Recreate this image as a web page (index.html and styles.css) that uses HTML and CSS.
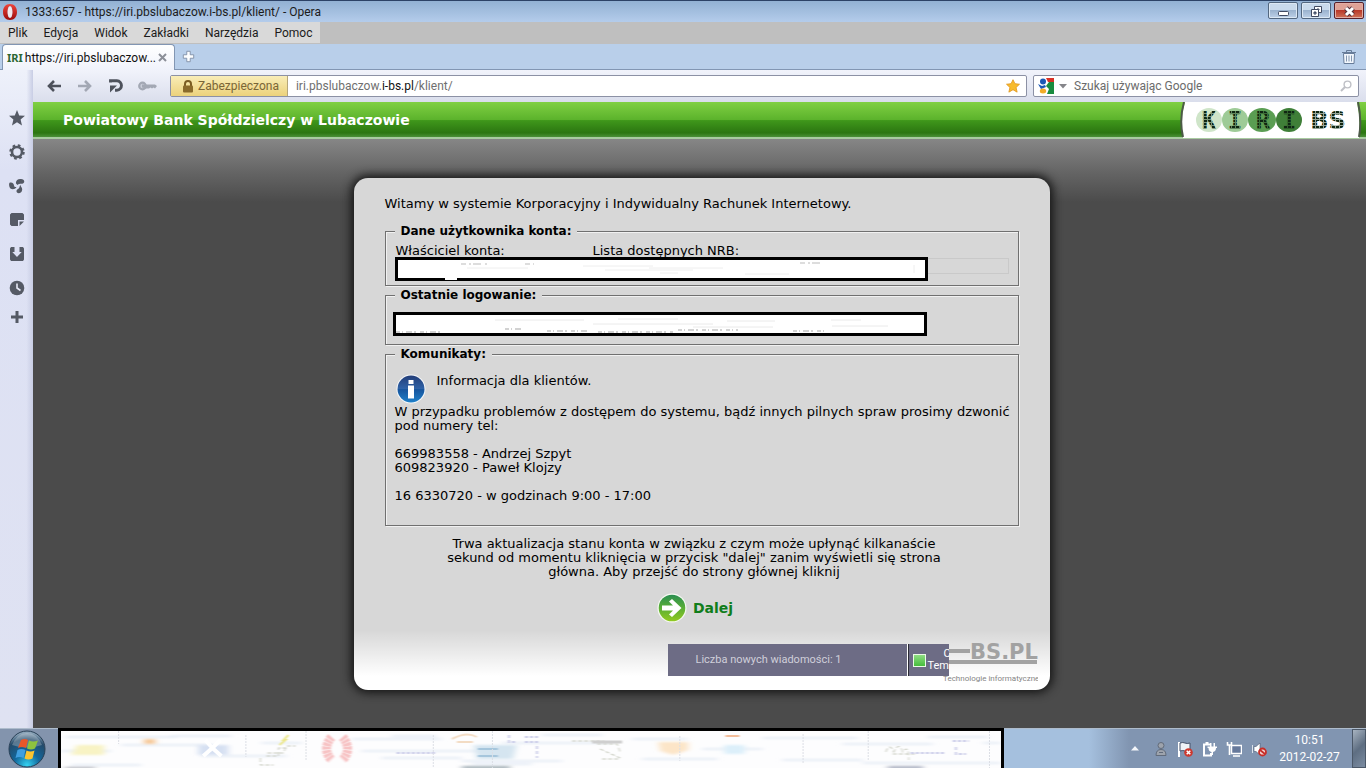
FILE: index.html
```html
<!DOCTYPE html>
<html lang="pl">
<head>
<meta charset="utf-8">
<title>1333:657 - https://iri.pbslubaczow.i-bs.pl/klient/ - Opera</title>
<link rel="stylesheet" href="styles.css">
</head>
<body>
<div class="desktop">
  <header class="titlebar">
    <svg class="opera" viewBox="0 0 16 18" width="16" height="18"><defs><linearGradient id="op" x1="0" y1="0" x2="0" y2="1"><stop offset="0" stop-color="#f0453c"/><stop offset="1" stop-color="#9c0b0b"/></linearGradient></defs><path fill="url(#op)" fill-rule="evenodd" d="M8 1C3.600 1 1 4.500 1 9s2.600 8 7 8 7-3.500 7-8-2.600-8-7-8zm0 2.200c1.700 0 2.400 2 2.400 5.800S9.700 14.800 8 14.800 5.600 12.800 5.600 9 6.300 3.200 8 3.200z"/><ellipse cx="8" cy="9" rx="2.300" ry="5.800" fill="#f3e9ee"/></svg>
    <span class="title">1333:657 - https://iri.pbslubaczow.i-bs.pl/klient/ - Opera</span>
    <div class="winbtns">
      <button aria-label="Minimalizuj"><svg width="28" height="16" viewBox="0 0 28 16"><rect x="9.500" y="8.500" width="10" height="4" rx="1" fill="#fff" stroke="#414b62"/></svg></button>
      <button aria-label="Przywróć"><svg width="28" height="16" viewBox="0 0 28 16"><g fill="#fff" stroke="#414b62"><path fill-rule="evenodd" d="M12.500 3.500h7v6h-7zM15 6v1h2V6z"/><path fill-rule="evenodd" d="M9.500 6.500h7v7h-7zM12 9v2h2V9z"/></g></svg></button>
      <button class="close" aria-label="Zamknij"><svg width="28" height="16" viewBox="0 0 28 16"><path d="M11 5l7 7m0-7l-7 7" stroke="#53303a" stroke-width="5"/><path d="M11 5l7 7m0-7l-7 7" stroke="#fff" stroke-width="3"/></svg></button>
    </div>
  </header>
  <nav class="menubar">
    <div class="menus"><button>Plik</button><button>Edycja</button><button>Widok</button><button>Zakładki</button><button>Narzędzia</button><button>Pomoc</button></div>
  </nav>
  <div class="tabbar">
    <div class="tab"><b>IRI</b><span>https://iri.pbslubaczow...</span><button aria-label="Zamknij kartę"><svg width="9" height="9" viewBox="0 0 9 9"><path d="M1 1l7 7m0-7L1 8" stroke="#8b8f98" stroke-width="2"/></svg></button></div>
    <button class="newtab" aria-label="Nowa karta"><svg width="13" height="13" viewBox="0 0 15 15"><path d="M5.500 1.500h4v4h4v4h-4v4h-4v-4h-4v-4h4z" fill="#fdfeff" stroke="#7c8ba3"/></svg></button>
    <button class="trash" aria-label="Zamknięte karty"><svg width="16" height="16" viewBox="0 0 16 16"><path d="M2.500 4.500h11l-.500 10H3z" fill="#f2f7fd" stroke="#677c99"/><path d="M1 3.500h14M5.500 3V1.500h5V3" fill="none" stroke="#677c99"/><path d="M5.500 6.500v6m2.500-6v6m2.500-6v6" stroke="#8497b0"/></svg></button>
  </div>
  <div class="window">
    <aside class="panelbar">
      <button aria-label="Zakładki"><svg width="16" height="16" viewBox="0 0 16 16"><path d="M8 0l2.200 5.400 5.800.400-4.400 3.800L13 15.500 8 12.300l-5 3.200 1.400-5.900L0 5.800l5.800-.400z"/></svg></button>
      <button aria-label="Widżety"><svg width="16" height="16" viewBox="0 0 16 16"><circle cx="8" cy="8" r="5" fill="none" stroke="#555a65" stroke-width="2.600"/><circle cx="8" cy="8" r="6.500" fill="none" stroke="#555a65" stroke-width="2.500" stroke-dasharray="2.600 2.505"/></svg></button>
      <button aria-label="Unite"><svg width="16" height="16" viewBox="0 0 16 16"><path d="M7 5.500C6.500 2.500 9 .500 12 1c3 0 4.300 2.500 2.300 4.200-1.600 1.200-3.500-.500-5.800 1.800zM1 4.500C3.500 4 5 5.500 5 7.500c.300 1.300 1 1.700 2.500 1.500C6 12 1.500 12 .500 9-.200 7 0 5 1 4.500zM11.500 6.500C11 8.500 14 9.500 13 12.500c-.500 2.500-3.500 3.500-5 2-1.500-2 .500-3.500 1.700-4 1-1 .600-2 1.800-4z"/></svg></button>
      <button aria-label="Notatki"><svg width="16" height="16" viewBox="0 0 16 16"><path d="M1 2.500L2.500 1h11L15 2.500V8H9v6H2.500L1 12.500z"/><path d="M10.500 9.500H15l-4.500 4.500z"/></svg></button>
      <button aria-label="Pobierane"><svg width="16" height="16" viewBox="0 0 16 16"><path d="M2 1h3.500v5H3.300L8 11l4.700-5h-2.200V1H14l1 1.500v11L14 15H2l-1-1.500v-11z"/></svg></button>
      <button aria-label="Historia"><svg width="16" height="16" viewBox="0 0 16 16"><circle cx="8" cy="8" r="7.300"/><path d="M8 3.500V8l3.500 2.500" fill="none" stroke="#e6e9f6" stroke-width="1.600"/></svg></button>
      <button class="add" aria-label="Dodaj panel"><svg width="12" height="12" viewBox="0 0 12 12"><path d="M4.500 0h3v4.500H12v3H7.500V12h-3V7.500H0v-3h4.500z"/></svg></button>
    </aside>
    <div class="browser">
      <div class="toolbar">
        <button class="nav" aria-label="Wstecz"><svg width="14" height="12" viewBox="0 0 14 12"><path d="M7 1L2 6l5 5M2.500 6H14" fill="none" stroke="#4e525c" stroke-width="2.600"/></svg></button>
        <button class="nav" aria-label="Dalej"><svg width="14" height="12" viewBox="0 0 14 12"><path d="M7 1l5 5-5 5M11.500 6H0" fill="none" stroke="#a3a8b4" stroke-width="2.600"/></svg></button>
        <button class="nav" aria-label="Odśwież"><svg width="14" height="14" viewBox="0 0 14 14"><path d="M1.500 3.500V1.800h6.300c6.200.400 6.200 9 0 9.400H6" fill="none" stroke="#4e525c" stroke-width="2.900"/><path d="M1 13.500V6.500h7z" fill="#4e525c"/></svg></button>
        <button class="nav key" aria-label="Hasła"><svg width="19" height="10" viewBox="0 0 19 10"><circle cx="4.500" cy="5" r="3.300" fill="#c9cdd8" stroke="#a3a8b4" stroke-width="2.200"/><path d="M4 3.500h13L19 5l-2 2.500-1.500-1-1.500 1-1.500-1-1.500 1H8L4 6.500z" fill="#a3a8b4"/></svg></button>
        <div class="address">
          <button class="secure"><svg width="12" height="13" viewBox="0 0 12 13"><path d="M3 6V4a3 3 0 016 0v2" fill="none" stroke="#7a5c22" stroke-width="2"/><rect x="1" y="5.500" width="10" height="7" rx="1" fill="#8a6b2b"/></svg>Zabezpieczona</button>
          <span class="url">iri.pbslubaczow.<em>i-bs.pl</em>/klient/</span>
          <svg class="fav" width="14" height="14" viewBox="0 0 16 16"><path d="M8 .800l2.200 4.600 5.200.600-3.900 3.600 1.200 5.400L8 12.200 3.300 15l1.200-5.400L.600 6l5.200-.600z" fill="#f8bb2d" stroke="#e29a23"/></svg>
        </div>
        <div class="search">
          <svg width="17" height="16" viewBox="0 0 17 16"><rect width="17" height="16" rx="1" fill="#fff"/><path d="M8 0h8v4h-6z" fill="#d93025"/><path d="M11 4h5v12H9l2-5-3-3z" fill="#198c3f"/><path d="M0 6l4 2 3-1 1 2-5 2z" fill="#1b58b5"/><circle cx="5" cy="3.500" r="3" fill="#1b58b5"/><ellipse cx="5" cy="13" rx="3.200" ry="2.500" fill="#f2ac27"/></svg>
          <svg class="drop" width="8" height="5" viewBox="0 0 8 5"><path d="M0 0h8L4 4.500z" fill="#85858a"/></svg>
          <input type="text" aria-label="Szukaj" placeholder="Szukaj używając Google">
          <svg width="12" height="12" viewBox="0 0 12 12"><circle cx="7.500" cy="4.500" r="3.400" fill="none" stroke="#bfc0c6" stroke-width="1.400"/><path d="M5 7L1 11" stroke="#bfc0c6" stroke-width="2"/></svg>
        </div>
      </div>
      <div class="page">
        <div class="banner">
          <h1>Powiatowy Bank Spółdzielczy w Lubaczowie</h1>
          <svg class="kiri" viewBox="0 0 182 37" width="182" height="37">
            <defs><pattern id="dots" width="4" height="3" patternUnits="userSpaceOnUse"><rect width="4" height="3" fill="#173519" opacity=".45"/><rect width="3" height="2" fill="#0f2612"/></pattern></defs>
            <path d="M5 0h172q4 18 2 36H3Q-1 18 5 0z" fill="#fff"/><path d="M4 0Q-1 18 3 35M178 0q4 18 1 35" fill="none" stroke="#4c5a47" stroke-width="2"/>
            <ellipse cx="29" cy="18" rx="13" ry="12" fill="#cfe5c9"/><ellipse cx="55" cy="18" rx="13" ry="12" fill="#9ecb97"/><ellipse cx="82" cy="18" rx="14" ry="12" fill="#5a9d52"/><ellipse cx="109" cy="18" rx="13" ry="12" fill="#3f7f38"/>
            <g class="kirit" fill="url(#dots)" text-anchor="middle"><text x="29" y="27">K</text><text x="55" y="27">I</text><text x="83" y="27">R</text><text x="109" y="27">I</text><text class="bs" x="148" y="27">BS</text></g>
          </svg>
        </div>
        <main class="card">
          <p class="welcome">Witamy w systemie Korporacyjny i Indywidualny Rachunek Internetowy.</p>
          <fieldset class="owner">
            <legend>Dane użytkownika konta:</legend>
            <div class="cols"><label for="nrb">Właściciel konta:</label><span>Lista dostępnych NRB:</span></div>
            <input id="nrb" class="nrb" type="text" disabled>
            <svg class="mask m1" width="533" height="24" viewBox="0 0 533 24"><rect x="1.500" y="1.500" width="530" height="21" fill="#fff" stroke="#000" stroke-width="3"/><path d="M42 19h20v4H50v-2h-8z" fill="#fff"/><g stroke="#bbb" stroke-dasharray="5 3 2 2 8 4"><path d="M66 7h26M130 7h9M405 6h22" /><path stroke="#eee" stroke-dasharray="none" d="M72 11h61M188 9h70M210 13h88M254 11h74M350 17h44M265 16h18M519 8v8"/></g></svg>
          </fieldset>
          <fieldset class="last">
            <legend>Ostatnie logowanie:</legend>
            <svg class="mask m2" width="534" height="24" viewBox="0 0 534 24"><rect x="1.500" y="1.500" width="531" height="21" fill="#fff" stroke="#000" stroke-width="3"/><g stroke="#a5a5a5" stroke-dasharray="4 2 1 3 6 2 2 4"><path d="M3 20h45M112 17h18M154 19h41M205 20h75M400 19h32M285 18h60"/><path stroke="#eaeaea" stroke-dasharray="none" d="M102 8h89M200 12h120M225 7h60M334 9h48M438 8h30M439 14h56M300 15h80"/></g></svg>
          </fieldset>
          <fieldset class="messages">
            <legend>Komunikaty:</legend>
            <div class="inforow">
              <svg width="30" height="30" viewBox="0 0 30 30"><defs><linearGradient id="inf" x1="0" y1="0" x2="0" y2="1"><stop offset="0" stop-color="#233d78"/><stop offset=".5" stop-color="#2f63a8"/><stop offset=".52" stop-color="#17559d"/><stop offset="1" stop-color="#1f80c9"/></linearGradient></defs><circle cx="15" cy="15" r="14.500" fill="#f7f9fb"/><circle cx="15" cy="15" r="13.500" fill="url(#inf)"/><rect x="12.500" y="6" width="5" height="4" fill="#fff"/><path d="M12 11.500h6v13h-6z" fill="#fff"/></svg>
              <span>Informacja dla klientów.</span>
            </div>
            <p>W przypadku problemów z dostępem do systemu, bądź innych pilnych spraw prosimy dzwonić<br>pod numery tel:</p>
            <p>669983558 - Andrzej Szpyt<br>609823920 - Paweł Klojzy</p>
            <p>16 6330720 - w godzinach 9:00 - 17:00</p>
          </fieldset>
          <p class="wait">Trwa aktualizacja stanu konta w związku z czym może upłynąć kilkanaście<br>sekund od momentu kliknięcia w przycisk "dalej" zanim wyświetli się strona<br>główna. Aby przejść do strony głównej kliknij</p>
          <a class="next" href="#"><svg width="30" height="30" viewBox="0 0 30 30"><defs><linearGradient id="nx" x1="0" y1="0" x2="0" y2="1"><stop offset="0" stop-color="#2b8e52"/><stop offset=".5" stop-color="#5aae35"/><stop offset="1" stop-color="#92c921"/></linearGradient></defs><circle cx="15" cy="15" r="14.500" fill="#f6faf2"/><circle cx="15" cy="15" r="13.300" fill="url(#nx)"/><path d="M5 12.500h11l-4-4L15 6l9.500 9-9.500 9-3-2.500 4-4H5z" fill="#fff"/></svg>Dalej</a>
          <footer class="cardfoot">
            <div class="news">
              <div class="count">Liczba nowych wiadomości: 1</div>
              <div class="status"><i></i><div><span>C</span><span>Tem</span></div></div>
            </div>
            <svg class="ibs" width="95" height="43" viewBox="0 0 95 43"><path d="M0 8h27v4H0zM0 19h94v4H0z" fill="#a2a2a2"/><text class="big" x="27" y="18">BS.PL</text><text class="small" x="0" y="40">Technologie informatyczne</text></svg>
          </footer>
        </main>
      </div>
    </div>
  </div>
  <footer class="taskbar">
    <button class="start" aria-label="Start"><svg width="38" height="38" viewBox="0 0 38 38"><defs><radialGradient id="orb" cx=".5" cy=".95" r=".9"><stop offset="0" stop-color="#35d3f2"/><stop offset=".4" stop-color="#12679c"/><stop offset=".8" stop-color="#244a69"/><stop offset="1" stop-color="#8ba4b8"/></radialGradient></defs><circle cx="19" cy="19" r="18" fill="url(#orb)" stroke="#294056"/><path d="M4 15Q9 3 19 3t15 12q-15 5-30 0z" fill="#fff" opacity=".25"/><path d="M13 10q4-2 7 0l-2 8q-4-2-8 0z" fill="#e8572a"/><path d="M21 10.500q4 2 9 0l-3 8q-4 2-8 0z" fill="#8dc33f"/><path d="M9.500 20q4-2 8 0l-2 8q-4-2-8 0z" fill="#3f9fe0"/><path d="M18.500 20.500q4 2 8 0l-2 8q-4 2-8 0z" fill="#fcc42f"/></svg></button>
    <div class="apps">
      <svg viewBox="0 0 938 37" preserveAspectRatio="none" width="100%" height="37">
        <defs><filter id="soft"><feGaussianBlur stdDeviation="3 1.200"/></filter><filter id="soft2"><feGaussianBlur stdDeviation="1 .4"/></filter></defs>
        <rect width="938" height="37" fill="#fdfdfe"/>
        <g filter="url(#soft)" fill="none" stroke="#dfe8f3" stroke-width="1.500"><path d="M5 6h110M60 14h90M0 20h50M110 5h60M140 25h85M200 12h40M290 8h90M300 20h130M320 27h80M330 5h45M400 30h100M440 12h110M480 4h60M570 8h55M580 28h75M640 18h60M700 7h95M720 29h80M780 13h90M800 32h138M865 6h60M920 12h18M10 34h70M410 33h60"/></g>
        <g filter="url(#soft)"><path d="M16 14h27v10H10z" fill="#f8f3c4"/><path d="M83 8h11v5H83z" fill="#f6c796"/><path d="M137 14h30v10h-30z" fill="#d6e0f2"/><path d="M412 14h43l-4 14h-36z" fill="#d5e5f0"/><path d="M596 11h30v8l-15 5-13-4z" fill="#fce5c8"/><path d="M662 14h20v9h-20z" fill="#dceffa"/><path d="M400 35h48v3h-48z" fill="#a7b3ba"/><path d="M825 35h35v3h-35z" fill="#adb3c3"/><path d="M4 36h30v2H4z" fill="#aeb1b9"/></g>
        <path d="M144 9l7 8-9 8m17-16l-8 8 9 8" fill="none" stroke="#fff" stroke-width="4"/>
        <g filter="url(#soft2)"><g fill="none" stroke="#f7c3c4" stroke-width="9" stroke-dasharray="3 .6"><path d="M270 6q-10 12 0 23M281 6q10 12 0 23"/></g>
          <g fill="none" stroke="#c7cabd" stroke-dasharray="4 2"><path d="M206 22h16l3-7h9M199 27v7h13M205 25h12v-8h8M535 13h20l3 8M538 18l20 9M540 28h18M823 21q4-10 8 0 5-11 9 0 6-9 6 8M830 23h23M510 10h32"/></g>
          <g fill="none" stroke="#c9cbe8" stroke-width="2" stroke-dasharray="3 2"><path d="M447 4v7h8M463 6h13M463 11h13M475 15v12M335 22h40M848 22h35M890 10h16M893 16v7h10"/></g>
          <path d="M218 14l6-5h-2l5-5" fill="none" stroke="#ece789" stroke-width="2"/><path d="M390 8q15-8 25-2M395 11h16" fill="none" stroke="#f3dcc4" stroke-width="2"/><path d="M663 5h14" stroke="#f3bd9a" stroke-width="2"/><path d="M416 18h20M416 25h20" stroke="#a6c6dc" stroke-width="2"/><path d="M530 11h30" stroke="#cfcfcf" stroke-width="3"/></g>
        <g stroke="#dcdfe5" stroke-dasharray="2 1"><path d="M57.500 0v13M184.500 4v22M244.500 0v30M371.500 4v33M430.500 0v37M617.500 5v25M740.500 3v30M805.500 0v30M926.500 0v37"/></g>
      </svg>
    </div>
    <div class="tray">
      <svg width="8" height="5" viewBox="0 0 8 5"><path d="M0 4.500L4 0l4 4.500z" fill="#f3f6fa"/></svg>
      <svg width="14" height="16" viewBox="0 0 14 16"><circle cx="7" cy="4.500" r="3" fill="#9da3ac" stroke="#616b7a"/><path d="M2 14.500q0-6 5-6t5 6z" fill="#9da3ac" stroke="#616b7a"/><path d="M5 11.500h4" stroke="#616b7a"/></svg>
      <svg width="16" height="16" viewBox="0 0 16 16"><path d="M2 1v15" stroke="#fff" stroke-width="2"/><path d="M3 2q3-1 5 0t5 0v8q-3 1-5 0t-5 0z" fill="#eef2f7" stroke="#46536b"/><circle cx="11.500" cy="11.500" r="4.300" fill="#cc382e"/><path d="M9.700 9.700l3.600 3.600m0-3.600l-3.600 3.600" stroke="#fff" stroke-width="1.500"/></svg>
      <svg width="15" height="16" viewBox="0 0 15 16"><path d="M8 3.500H2v11h7V12" fill="none" stroke="#fff" stroke-width="2"/><path d="M3.500 1h3v2h-3z" fill="#fff"/><path d="M5.500 5.500H15v1.500h-1q0 3.500-3 4V14H9.500v-3q-3-.500-3-4h-1zM8 2h1.500v4H8zM11.500 2H13v4h-1.500z" fill="#fff"/></svg>
      <svg width="16" height="16" viewBox="0 0 16 16"><rect x="5.500" y="4.500" width="10" height="8" fill="#66799b" stroke="#fff" stroke-width="1.500"/><path d="M7 15h7M3.500 7v7M1.500 1v3h4V1M3.500 4v3" fill="none" stroke="#fff" stroke-width="1.600"/></svg>
      <svg width="16" height="16" viewBox="0 0 16 16"><path d="M3 5.500h2L9 2v12l-4-3.500H3z" fill="#fff" stroke="#4c5970" stroke-width=".6"/><path d="M1.500 4v8" stroke="#dce2ea"/><circle cx="11.500" cy="11" r="3.500" fill="#f4d5d2" stroke="#c72e28" stroke-width="1.800"/><path d="M9 9l5 4" stroke="#c72e28" stroke-width="1.800"/></svg>
      <div class="clock"><span>10:51</span><span>2012-02-27</span></div>
      <button class="peek" aria-label="Pokaż pulpit"></button>
    </div>
  </footer>
</div>
</body>
</html>
```
FILE: styles.css
```css
* { box-sizing: border-box; }
body { margin: 0; font: 12px Roboto, "Noto Sans", sans-serif; color: #1b1b1b; }
button { margin: 0; padding: 0; border: 0; background: none; font: inherit; color: inherit; }
svg { display: block; flex: none; }
p, h1 { margin: 0; }

.desktop { display: flex; flex-direction: column; height: 100vh; overflow: hidden; background: #dfe3f2; }

.titlebar { display: flex; align-items: center; height: 22px; flex: none; padding-left: 2px; border-top: 1px solid #2c4266; background: linear-gradient(#92b1d3, #b4cceb); }
.title { flex: 1; padding-left: 7px; }
.winbtns { display: flex; gap: 3px; align-self: flex-start; padding: 1px 2px 0 0; }
.winbtns button { width: 30px; height: 17px; border: 1px solid #53677f; border-radius: 2px; background: linear-gradient(#c9daec 45%, #9bb3cf 50%, #bdd1e8); box-shadow: inset 0 0 0 1px #dce8f4; }
.winbtns .close { border-color: #58202a; background: linear-gradient(#dfa296 45%, #b9392a 50%, #cf7259); box-shadow: inset 0 0 0 1px #e2aea5; }

.menubar { height: 22px; flex: none; background: #bfbfbf; }
.menus { display: inline-flex; gap: 16px; height: 21px; padding: 0 8px; background: #d9d9d9; }

.tabbar { display: flex; align-items: center; height: 26px; flex: none; padding-right: 9px; border-bottom: 1px solid #8296b3; background: #b9cfea; }
.tab { display: flex; align-items: center; width: 173px; height: 26px; margin: 0 7px 0 2px; padding: 1px 7px 0 4px; border: 1px solid #8296b3; border-bottom: 0; border-radius: 4px 4px 0 0; background: linear-gradient(#fff, #f0f3fb); }
.tab b { color: #2c6634; font: bold 11px "Noto Sans", sans-serif; }
.tab span { flex: 1; padding-left: 2px; white-space: nowrap; color: #111; }
.trash { margin-left: auto; }

.window { display: flex; flex: 1; min-height: 0; }
.panelbar { display: flex; flex-direction: column; align-items: center; gap: 18px; width: 33px; flex: none; padding-top: 40px; background: linear-gradient(90deg, transparent 80%, #c8cde4), linear-gradient(#eef1fa, #dde1f4 100px, #dfe2f2); }
.panelbar svg { fill: #555a65; }
.panelbar .add { margin-top: -3px; }
.browser { display: flex; flex-direction: column; flex: 1; min-width: 0; }

.toolbar { display: flex; align-items: center; gap: 17px; height: 32px; flex: none; padding: 0 7px 0 14px; background: linear-gradient(#f1f3fb, #dadeec); }
.key { margin-left: -2px; }
.address, .search { display: flex; align-items: center; height: 22px; border: 1px solid #8c91a5; border-radius: 2px; background: #fff; }
.address { flex: 1; margin-left: -4px; padding-right: 6px; color: #6f6f6f; }
.secure { display: flex; align-items: center; gap: 4px; height: 20px; padding: 0 8px 0 11px; border-right: 1px solid #b5a67a; background: linear-gradient(#f9edb7, #ecd27c); color: #7a6637; }
.url { flex: 1; padding-left: 8px; }
.url em { font-style: normal; color: #111; }
.search { width: 326px; margin-left: -11px; padding: 0 6px 0 4px; }
.search .drop { margin: 0 7px 0 4px; }
.search input { flex: 1; min-width: 0; padding: 0; border: 0; outline: 0; background: none; font: inherit; }
.search input::placeholder { color: #6b6b6b; opacity: 1; }

.page { flex: 1; min-height: 0; overflow: hidden; background: linear-gradient(#868686 37px, #656565 70px, #4b4b4b 100px); font: 13px/14px "DejaVu Sans", Verdana, sans-serif; color: #000; }
.banner { display: flex; align-items: flex-start; justify-content: space-between; height: 37px; padding: 0 4px 0 30px; border-bottom: 2px solid #a9cba1; background: linear-gradient(#80d043, #5cb32c 50%, #3f971b 53%, #2c7611 88%, #4b9038); }
.banner h1 { font: bold 14px/36px "DejaVu Sans", Verdana, sans-serif; color: #fff; }
.kirit { font: bold 24px "DejaVu Sans Mono", monospace; }
.kirit .bs { font-family: "DejaVu Sans", sans-serif; }

.card { width: 696px; margin: 39px auto 0; position: relative; left: 2px; padding: 18px 30px 0 31px; border-radius: 14px; background: linear-gradient(transparent 452px, #fff 498px), #d7d7d7; box-shadow: 0 0 10px 3px #161616; }
.welcome { line-height: 16px; margin-bottom: 11px; }
fieldset { position: relative; min-width: 0; margin: 0 1px 1px 0; padding: 0 9px; border: 1px solid #707070; box-shadow: 1px 1px 0 #f1f1f1, inset 1px 1px 0 #f1f1f1; }
legend { padding: 0 6px; background: #d7d7d7; font-size: 12px; font-weight: bold; line-height: 16px; }
.owner { height: 63px; padding-top: 5px; }
.cols { display: grid; grid-template-columns: 197px 1fr; padding-left: 1px; }
.nrb { display: block; width: 100%; height: 16px; border: 1px solid #c9c9c9; background: none; }
.mask { position: absolute; }
.m1 { left: 9px; top: 18px; }
.m2 { left: 7px; top: 9px; }
.last { height: 58px; }
.messages { padding: 12px 9px 22px; white-space: nowrap; }
.messages p + p { margin-top: 14px; }
.inforow { display: flex; gap: 11px; height: 31px; padding-left: 1px; }
.wait { padding: 10px 16px 0 0; text-align: center; }
.next { display: flex; align-items: center; justify-content: center; gap: 6px; margin-top: 14px; padding-right: 14px; font-size: 14px; font-weight: bold; color: #107d1b; text-decoration: none; }
.cardfoot { display: flex; align-items: flex-start; justify-content: flex-end; height: 67px; padding-top: 18px; margin-right: -18px; }
.news { display: flex; position: relative; z-index: 1; height: 32px; margin: 3px -6px 0 0; font: 11px/12px Roboto, "Noto Sans", sans-serif; color: #fff; background: #6d6c85; }
.count { width: 240px; padding-left: 28px; border-right: 1px solid #fff; line-height: 32px; color: #d0cfda; }
.status { display: flex; align-items: center; gap: 2px; width: 41px; padding-left: 4px; border-left: 1px solid #2b2b35; overflow: hidden; }
.status i { width: 13px; height: 13px; flex: none; border: 1px solid #eafbe6; background: linear-gradient(#8fdd83, #46bd3c); }
.status div { display: flex; flex-direction: column; }
.status span:first-child { padding-left: 16px; }
.ibs .big { font: bold 21px "DejaVu Sans", sans-serif; fill: #a2a2a2; }
.ibs .small { font: 8px Roboto, sans-serif; fill: #858585; }

.taskbar { display: flex; height: 40px; flex: none; border-top: 1px solid #aebccc; background: #8394ad; }
.start { width: 58px; flex: none; padding-left: 8px; }
.apps { flex: 1; min-width: 0; margin-top: -1px; border: 3px solid #000; border-bottom: 0; }
.tray { display: flex; align-items: center; gap: 9px; width: 362px; flex: none; padding-left: 127px; background: linear-gradient(90deg, #a5c0de 85px, #8195b1 125px); }
.tray > svg:first-child { margin-right: 6px; }
.clock { display: flex; flex-direction: column; flex: 1; align-items: center; line-height: 17px; color: #fff; }
.peek { width: 14px; height: 39px; border: 1px solid #4b5868; background: linear-gradient(135deg, #a7b3c0, #5e6e82 50%, #7c8da2); }
```
